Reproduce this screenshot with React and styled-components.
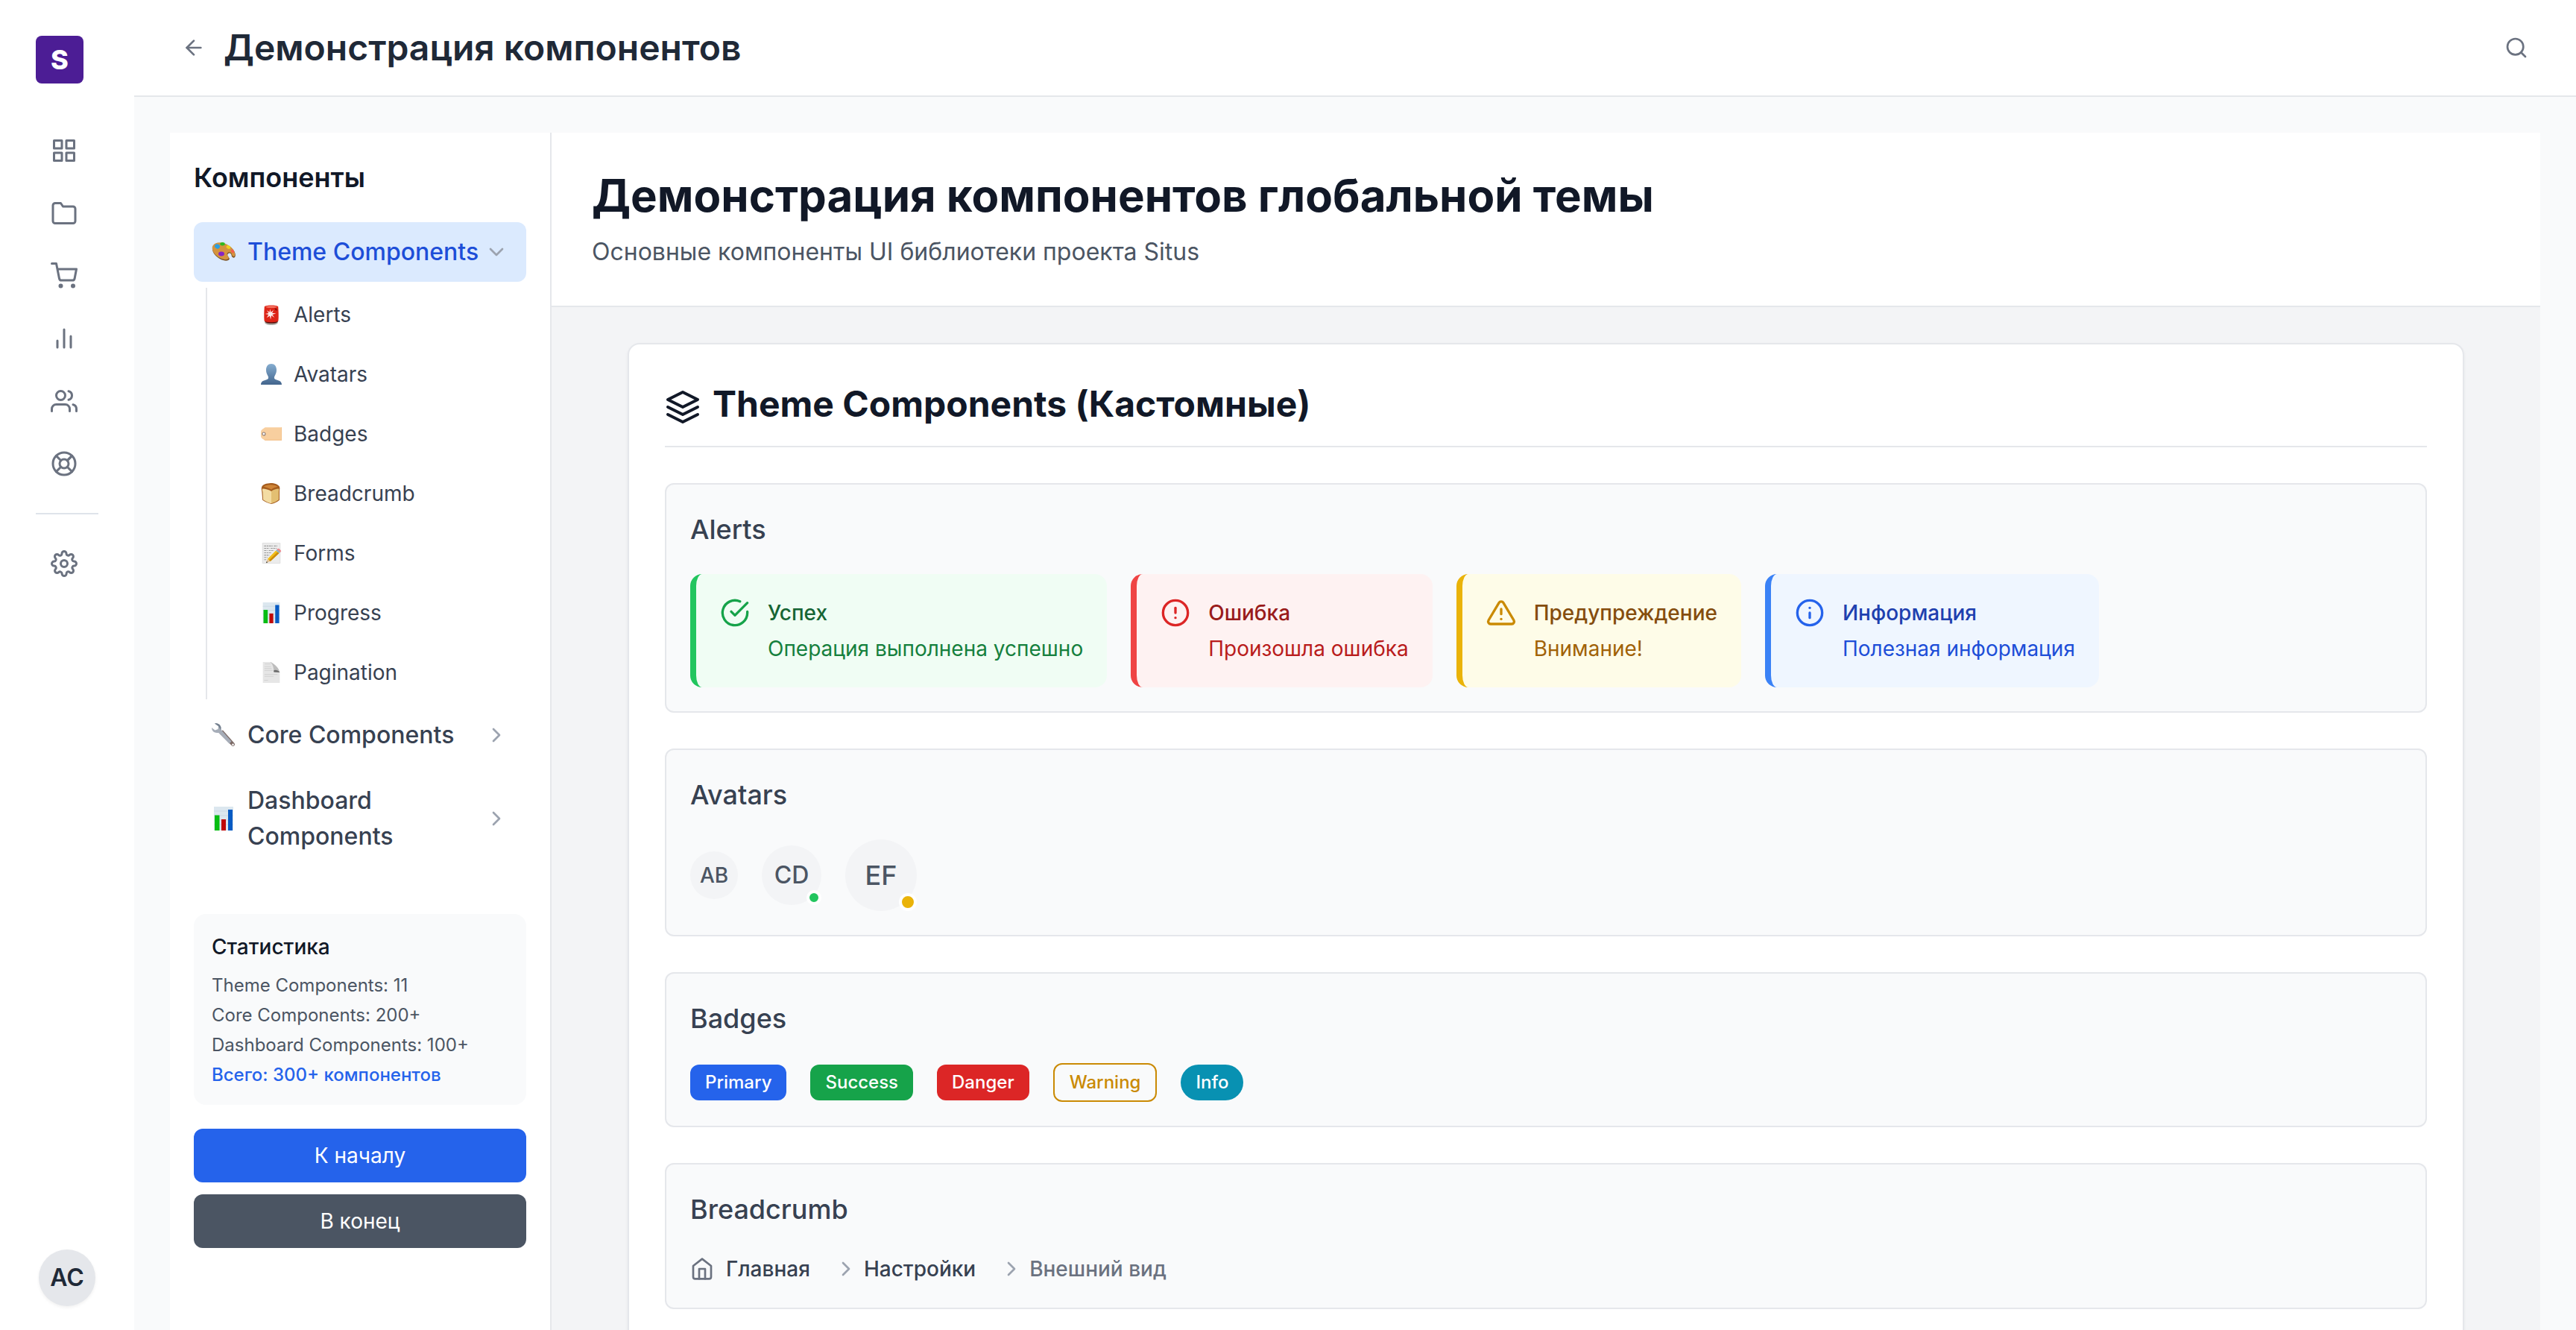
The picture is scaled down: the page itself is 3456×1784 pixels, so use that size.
import React from "react";
import styled, { createGlobalStyle, css } from "styled-components";
import {
  FiAlertCircle,
  FiAlertTriangle,
  FiArrowLeft,
  FiBarChart2,
  FiCheckCircle,
  FiChevronDown,
  FiChevronRight,
  FiFolder,
  FiGrid,
  FiHome,
  FiInfo,
  FiLayers,
  FiLifeBuoy,
  FiSearch,
  FiSettings,
  FiShoppingCart,
  FiUsers,
} from "react-icons/fi";

const gray = {
  50: "#f9fafb",
  100: "#f3f4f6",
  200: "#e5e7eb",
  400: "#9ca3af",
  500: "#6b7280",
  600: "#4b5563",
  700: "#374151",
  800: "#1f2937",
  900: "#111827",
};

const GlobalStyle = createGlobalStyle`
  *, *::before, *::after { box-sizing: border-box; }
  body {
    margin: 0;
    background: ${gray[50]};
    color: ${gray[900]};
    font-family: Inter, "Liberation Sans", sans-serif;
    font-size: 32px;
    line-height: 48px;
    -webkit-font-smoothing: antialiased;
  }
  h1, h2, h3, h4, p, ul, ol { margin: 0; padding: 0; }
  ul, ol { list-style: none; }
  a { color: inherit; text-decoration: none; }
  button { font: inherit; color: inherit; border: 0; background: none; cursor: pointer; }
  svg { display: block; flex-shrink: 0; }
`;

/* ---------- Shell ---------- */

const Shell = styled.div`
  display: flex;
  height: 100vh;
  overflow: hidden;
`;

const Rail = styled.nav`
  display: flex;
  flex-direction: column;
  flex: none;
  width: 180px;
  padding: 48px 48px 32px;
  background: #fff;
`;

const Logo = styled.a`
  display: flex;
  align-items: center;
  justify-content: center;
  width: 64px;
  height: 64px;
  margin-bottom: 60px;
  border-radius: 8px;
  background: #4c1d95;
  color: #fff;
  font-size: 36px;
  font-weight: 800;
`;

const RailList = styled.ul`
  display: flex;
  flex-direction: column;
  gap: 24px;
`;

const RailLink = styled.a`
  display: flex;
  align-items: center;
  width: 76px;
  height: 60px;
  padding: 0 20px;
  color: ${gray[500]};
  font-size: 36px;
`;

const RailDivider = styled.hr`
  width: 100%;
  height: 2px;
  margin: 36px 0;
  border: 0;
  background: #dfe4ea;
`;

const UserButton = styled.button`
  display: flex;
  align-items: center;
  justify-content: center;
  align-self: center;
  width: 76px;
  height: 76px;
  margin-top: auto;
  padding: 0;
  border-radius: 50%;
  background: ${gray[200]};
  box-shadow: 0 2px 4px rgba(0, 0, 0, 0.06);
  color: ${gray[800]};
  font-weight: 600;
`;

const Page = styled.div`
  display: flex;
  flex-direction: column;
  flex: 1;
  min-width: 0;
`;

const TopBar = styled.header`
  display: flex;
  align-items: center;
  gap: 8px;
  padding: 32px 48px;
  border-bottom: 2px solid ${gray[200]};
  background: #fff;
`;

const PageTitle = styled.h1`
  flex: 1;
  color: ${gray[800]};
  font-size: 48px;
  line-height: 64px;
  font-weight: 600;
`;

const IconButton = styled.button`
  display: flex;
  padding: 16px;
  border-radius: 12px;
  color: ${gray[500]};
`;

const Workspace = styled.div`
  display: flex;
  flex: 1;
  min-height: 0;
  padding: 48px 48px 0;
`;

/* ---------- Catalogue sidebar ---------- */

const Aside = styled.aside`
  flex: none;
  width: 512px;
  padding: 32px;
  border-right: 2px solid ${gray[200]};
  background: #fff;
  overflow: hidden;
`;

const AsideTitle = styled.h2`
  margin-bottom: 32px;
  font-size: 36px;
  line-height: 56px;
  font-weight: 600;
`;

const GroupList = styled.ul`
  display: flex;
  flex-direction: column;
  gap: 8px;
`;

const GroupButton = styled.button`
  display: flex;
  align-items: center;
  width: 100%;
  padding: 16px 24px;
  border-radius: 12px;
  background: ${(p) => (p.$active ? "#dbeafe" : "transparent")};
  color: ${(p) => (p.$active ? "#1d4ed8" : gray[700])};
  font-weight: 500;
  text-align: left;
`;

const GroupLabel = styled.span`
  flex: 1;
  margin-left: 16px;
`;

const Chevron = styled.span`
  color: ${gray[400]};
  font-size: 32px;
`;

const SubList = styled.ul`
  display: flex;
  flex-direction: column;
  gap: 8px;
  margin: 8px 0 0 16px;
  padding-left: 48px;
  border-left: 2px solid ${gray[200]};
`;

const SubLink = styled.a`
  display: flex;
  align-items: center;
  gap: 16px;
  padding: 16px 24px;
  border-radius: 12px;
  color: ${gray[700]};
  font-size: 28px;
  line-height: 40px;
`;

const Stats = styled.section`
  margin-top: 64px;
  padding: 24px;
  border-radius: 16px;
  background: ${gray[50]};
`;

const StatsTitle = styled.h3`
  margin-bottom: 16px;
  font-size: 28px;
  line-height: 40px;
  font-weight: 500;
`;

const StatsList = styled.ul`
  display: flex;
  flex-direction: column;
  gap: 8px;
  color: ${gray[600]};
  font-size: 24px;
  line-height: 32px;
`;

const StatsTotal = styled.li`
  color: #2563eb;
  font-weight: 500;
`;

const JumpButtons = styled.div`
  display: flex;
  flex-direction: column;
  gap: 16px;
  margin-top: 32px;
`;

const JumpButton = styled.button`
  padding: 16px 24px;
  border-radius: 12px;
  background: ${(p) => (p.$primary ? "#2563eb" : gray[600])};
  color: #fff;
  font-size: 28px;
  line-height: 40px;
`;

/* ---------- Main column ---------- */

const Main = styled.main`
  flex: 1;
  min-width: 0;
  background: ${gray[100]};
  overflow: hidden;
`;

const Intro = styled.header`
  padding: 48px;
  border-bottom: 2px solid ${gray[200]};
  background: #fff;
`;

const IntroInner = styled.div`
  max-width: 2560px;
  margin: 0 auto;
`;

const IntroTitle = styled.h2`
  margin-bottom: 16px;
  font-size: 60px;
  line-height: 72px;
  font-weight: 700;
`;

const IntroText = styled.p`
  color: ${gray[600]};
`;

const Content = styled.div`
  max-width: 2560px;
  margin: 0 auto;
  padding: 48px;
`;

const Card = styled.section`
  padding: 48px;
  border: 2px solid ${gray[200]};
  border-radius: 16px;
  background: #fff;
  box-shadow: 0 2px 4px rgba(0, 0, 0, 0.05);
`;

const CardTitle = styled.h2`
  margin-bottom: 48px;
  padding-bottom: 24px;
  border-bottom: 2px solid ${gray[200]};
  font-size: 48px;
  line-height: 64px;
  font-weight: 700;

  svg {
    display: inline-block;
    margin-right: 16px;
    vertical-align: middle;
  }
`;

const DemoList = styled.div`
  display: flex;
  flex-direction: column;
  gap: 48px;
`;

const DemoBox = styled.section`
  padding: 32px;
  border: 2px solid ${gray[200]};
  border-radius: 12px;
  background: ${gray[50]};
`;

const DemoTitle = styled.h3`
  margin-bottom: 32px;
  color: ${gray[700]};
  font-size: 36px;
  line-height: 56px;
  font-weight: 500;
`;

const DemoRow = styled.div`
  display: flex;
  flex-wrap: wrap;
  align-items: center;
  gap: 32px;
`;

const alertTones = {
  success: { bg: "#f0fdf4", bar: "#22c55e", icon: "#16a34a", title: "#166534", text: "#15803d" },
  error: { bg: "#fef2f2", bar: "#ef4444", icon: "#dc2626", title: "#991b1b", text: "#b91c1c" },
  warning: { bg: "#fefce8", bar: "#eab308", icon: "#ca8a04", title: "#854d0e", text: "#a16207" },
  info: { bg: "#eff6ff", bar: "#3b82f6", icon: "#2563eb", title: "#1e40af", text: "#1d4ed8" },
};

const AlertBox = styled.div`
  display: flex;
  gap: 24px;
  padding: 32px;
  border-left: 8px solid ${(p) => alertTones[p.$tone].bar};
  border-radius: 16px;
  background: ${(p) => alertTones[p.$tone].bg};
  font-size: 28px;
  line-height: 40px;

  svg {
    color: ${(p) => alertTones[p.$tone].icon};
  }
  h4 {
    margin-bottom: 8px;
    color: ${(p) => alertTones[p.$tone].title};
    font-size: inherit;
    font-weight: 500;
  }
  p {
    color: ${(p) => alertTones[p.$tone].text};
  }
`;

const Avatar = styled.span`
  position: relative;
  display: flex;
  align-items: center;
  justify-content: center;
  width: ${(p) => p.$size}px;
  height: ${(p) => p.$size}px;
  border-radius: 50%;
  background: ${gray[100]};
  color: ${gray[600]};
  font-size: ${(p) => p.$font}px;
  font-weight: 500;
`;

const StatusDot = styled.span`
  position: absolute;
  right: 0;
  bottom: 0;
  width: ${(p) => p.$size}px;
  height: ${(p) => p.$size}px;
  border: 4px solid #fff;
  border-radius: 50%;
  background: ${(p) => p.$color};
`;

const Badge = styled.span`
  padding: 8px 20px;
  border-radius: ${(p) => (p.$pill ? "24px" : "12px")};
  font-size: 24px;
  line-height: 32px;
  font-weight: 500;
  ${(p) =>
    p.$outline
      ? css`
          border: 2px solid ${p.$color};
          color: ${p.$color};
        `
      : css`
          background: ${p.$color};
          color: #fff;
        `}
`;

const Crumbs = styled.ol`
  display: flex;
  align-items: center;
  gap: 32px;
  font-size: 28px;
  line-height: 40px;
  font-weight: 500;
`;

const Crumb = styled.li`
  display: flex;
  align-items: center;
  gap: ${(p) => (p.$first ? 16 : 8)}px;
  color: ${(p) => (p.$current ? gray[500] : gray[700])};

  svg {
    color: ${(p) => (p.$first ? gray[500] : gray[400])};
  }
`;

/* ---------- Pictograms ---------- */

const pictograms = {
  palette: (
    <>
      <path d="M2 8.500C6 2.500 15 3 22 7c6 3.500 10 9 9.800 13.500-.2 3.500-3 4-4.500 2-1-1.400-.5-3.500-2-4.500-2-1.200-4.500.5-4 2.500.6 2.400 3.500 3.500 2.200 5.500-1.600 2.600-7.500 2-12-.5C4.500 22-1.500 14 2 8.500Z" fill="#7b5120" />
      <path d="M1.500 7.500C5.500 2 14 2.300 21 6.200c6.500 3.600 10.500 9 10.300 13.300-.2 2.800-2.300 3.300-3.600 1.500-1.100-1.500-.7-3.200-2.200-4.200-2.300-1.400-5.500.2-4.800 2.700.6 2.300 3 3.300 2 5-1.500 2.500-7 2-11.500-.5C4.500 20.500-1.500 13 1.500 7.500Z" fill="#d4933e" />
      <ellipse cx="14.500" cy="5.300" rx="3.200" ry="2.200" fill="#2fb91f" />
      <ellipse cx="7.500" cy="8.500" rx="3.600" ry="2.900" fill="#2a9fe0" transform="rotate(25 7.500 8.500)" />
      <ellipse cx="22.500" cy="9.500" rx="3" ry="2.100" fill="#f0cf1f" transform="rotate(25 22.500 9.500)" />
      <ellipse cx="28" cy="15" rx="2.700" ry="1.900" fill="#f2604c" transform="rotate(50 28 15)" />
      <ellipse cx="13" cy="18.500" rx="4" ry="3" fill="#8624c4" />
    </>
  ),
  siren: (
    <>
      <path d="M6 26h20v2c0 2.500-4 4-10 4S6 30.500 6 28Z" fill="#a9a9a3" />
      <path d="M6 25.500h20l-.3 1.500c-1.500 1.800-5.500 2.500-9.700 2.500s-8-.8-9.500-2.500Z" fill="#5b0f0b" />
      <path d="M5.500 4C7 1 25 1 26.500 4c.6 7 .9 15 .3 21.500C25 28.500 7 28.500 5.200 25.500 4.600 18 4.900 11 5.500 4Z" fill="#dd2417" />
      <path d="M7.500 4c2-2 15-2 17 0 .5 2.500-17.500 2.500-17 0Z" fill="#f4705f" />
      <path d="m14 7 1.200 5.200L19.500 9l-2.300 4.400 6 .9-5.600 1.700 3.200 4.500-4.800-3-1 6-1.500-5.600-4.600 3 2.800-4.800-5.200-1.200 5.400-1.200L9 9.500l4.300 2.800Z" fill="#fff" opacity=".9" />
      <path d="M21 6c3 0 4 1 4 4l-3-1Z" fill="#8c1009" />
    </>
  ),
  person: (
    <>
      <defs>
        <linearGradient id="bust" x1="0" y1="0" x2="0" y2="1">
          <stop offset="0" stopColor="#85add0" />
          <stop offset="1" stopColor="#43658d" />
        </linearGradient>
      </defs>
      <path d="M16 0c5 0 8 4 8 9.500 0 3.500-1 6-2.500 8.500-1.500 2.500-1.500 5 1 6 4 1.600 9.500 2 9.500 8H0c0-6 5.500-6.400 9.500-8 2.500-1 2.500-3.500 1-6C9 15.500 8 13 8 9.500 8 4 11 0 16 0Z" fill="url(#bust)" />
    </>
  ),
  tag: (
    <>
      <path d="M6.500 6H32v20H6.500L2 23c-1.300-1-2-2-2-4v-6c0-2 .7-3 2-4Z" fill="#f8cf9f" />
      <path d="M31 6h1v20H6.500L4 24.500h27Z" fill="#f3c48e" />
      <circle cx="4.500" cy="16" r="2.300" fill="#fff" stroke="#8a7a75" strokeWidth="1.200" />
    </>
  ),
  bread: (
    <>
      <path d="M1.500 5.500C3 2 9 .2 15 0c6 0 12 2.300 13.500 5.500 1 2.500.2 4.500 0 7v13.500c-3 2.700-8 5-12.500 6C11 31 5.500 28.500 2.500 26L1.500 13C.8 10 .6 7.500 1.500 5.500Z" fill="#a55c1d" />
      <path d="M2.500 8.500c4 0 10 1.500 13.500 4v18.500c-4.500-1-9.500-3.300-12.500-5.700L2.800 13C2 11.500 1.800 10 2.500 8.500Z" fill="#f3dca3" />
      <path d="M16 12.500c2.500-2.500 8-4 11.500-4 .6 1.500 0 3-.2 5v12c-3 2.500-7 4.700-11.300 5.500Z" fill="#e3bf72" />
      <path d="M4 5.500c5-4 17-4 22 0-4 .8-7.500 2.200-10 4.500-3-2-7.500-3.200-12-4.500Z" fill="#cf8537" />
    </>
  ),
  memo: (
    <>
      <path d="M2.500.5h27v31h-27Z" fill="#ececec" stroke="#dcdcdc" />
      <path d="M5 5h13m2 0h5M5 8.500h8m2 0h9M5 12h5m2 0h8M5 15.500h11M5 19h8M5 22.500h5M5 26h4" stroke="#9b9b9b" strokeWidth="1.200" strokeDasharray="3 .8" />
      <path d="m10 25 13-13 5 4-13.500 12.500Z" fill="#f2bd16" />
      <path d="m12.500 26.800 13-12.600 2.500 1.800-13.500 12.500Z" fill="#c98a10" />
      <path d="m10 25 4.500 3.500L8 31Z" fill="#e3c49a" />
      <path d="m8.800 28.500 1.700 1.500L8 31Z" fill="#333" />
      <path d="m23 12 2-2 5 4-2 2Z" fill="#8fb3c0" />
      <path d="m25 10c2-2 7 2 5 4Z" fill="#ee8489" stroke="#ee8489" />
    </>
  ),
  chart: (
    <>
      <path d="M3 0h26v32H3Z" fill="#dce7ef" />
      <path d="M3 6h26M3 12h26M3 18h26M3 24h26" stroke="#cbd9e4" />
      <path d="M4 11.500h6.500V32H4Z" fill="#07bd12" />
      <path d="M13 17h6v15h-6Z" fill="#c00808" />
      <path d="M22 4h6v28h-6Z" fill="#075bc4" />
    </>
  ),
  page: (
    <>
      <path d="M3 0h12c4 2 5 8 5 11 3 1 7 1 9 5v16H3Z" fill="#e6e6e6" />
      <path d="M6 3h9M5.500 7h10m-10 3h11m-11 3h13m-13 6h20m-20 3h14M5 28h6" stroke="#cfcfcf" />
      <path d="M14 0c5 1 14 9 15 16-3-1-6-.5-9-.5C19.500 10 19 3 14 0Z" fill="#bdbdbd" />
      <path d="M19.500 13c3-1.500 7-.5 9.500 3-3 0-6-.5-9-.5Z" fill="#6b6b6b" />
    </>
  ),
  wrench: (
    <>
      <path d="m11 11 4-1.500L30.500 27c1.500 2.200-.8 4.800-3.200 3.500L10.500 14Z" fill="#7c6a66" />
      <path d="M4 .5c4-1 8 1.500 8.500 5.500.2 1.500 0 2.500 1 3.800l13 14.700-3 3L10 13.500c-1.500-1-3-.3-4.800-.7C2 12 0 9.500 0 6l4.500 3.500 4-1.500.5-4Z" fill="#a6adb8" />
      <path d="M4 .5c4-1 8 1.500 8.500 5.500l-.5 3-3-5Z" fill="#74808f" />
      <circle cx="28.500" cy="28.800" r="1.300" fill="#fff" />
    </>
  ),
};

const Pictogram = ({ name, size }) => (
  <svg width={size} height={size} viewBox="0 0 32 32" fill="none" aria-hidden="true">
    {pictograms[name]}
  </svg>
);

/* ---------- Data ---------- */

const railItems = [
  { label: "Панель", Icon: FiGrid },
  { label: "Проекты", Icon: FiFolder },
  { label: "Магазин", Icon: FiShoppingCart },
  { label: "Аналитика", Icon: FiBarChart2 },
  { label: "Пользователи", Icon: FiUsers },
  { label: "Поддержка", Icon: FiLifeBuoy },
];

const themeItems = [
  ["Alerts", "siren"],
  ["Avatars", "person"],
  ["Badges", "tag"],
  ["Breadcrumb", "bread"],
  ["Forms", "memo"],
  ["Progress", "chart"],
  ["Pagination", "page"],
];

const alerts = [
  { tone: "success", Icon: FiCheckCircle, title: "Успех", text: "Операция выполнена успешно" },
  { tone: "error", Icon: FiAlertCircle, title: "Ошибка", text: "Произошла ошибка" },
  { tone: "warning", Icon: FiAlertTriangle, title: "Предупреждение", text: "Внимание!" },
  { tone: "info", Icon: FiInfo, title: "Информация", text: "Полезная информация" },
];

/* ---------- Sections ---------- */

const NavRail = () => (
  <Rail>
    <Logo href="#">S</Logo>
    <RailList>
      {railItems.map(({ label, Icon }) => (
        <li key={label}>
          <RailLink href="#" aria-label={label}>
            <Icon />
          </RailLink>
        </li>
      ))}
    </RailList>
    <RailDivider />
    <RailLink href="#" aria-label="Настройки">
      <FiSettings />
    </RailLink>
    <UserButton type="button">AC</UserButton>
  </Rail>
);

const Group = ({ icon, label, open, children }) => (
  <li>
    <GroupButton type="button" $active={open} aria-expanded={!!open}>
      <Pictogram name={icon} size={32} />
      <GroupLabel>{label}</GroupLabel>
      <Chevron>{open ? <FiChevronDown /> : <FiChevronRight />}</Chevron>
    </GroupButton>
    {children}
  </li>
);

const Catalogue = () => (
  <Aside>
    <AsideTitle>Компоненты</AsideTitle>
    <GroupList>
      <Group icon="palette" label="Theme Components" open>
        <SubList>
          {themeItems.map(([label, icon]) => (
            <li key={label}>
              <SubLink href={`#${label.toLowerCase()}`}>
                <Pictogram name={icon} size={28} />
                {label}
              </SubLink>
            </li>
          ))}
        </SubList>
      </Group>
      <Group icon="wrench" label="Core Components" />
      <Group icon="chart" label="Dashboard Components" />
    </GroupList>
    <Stats>
      <StatsTitle>Статистика</StatsTitle>
      <StatsList>
        <li>Theme Components: 11</li>
        <li>Core Components: 200+</li>
        <li>Dashboard Components: 100+</li>
        <StatsTotal>Всего: 300+ компонентов</StatsTotal>
      </StatsList>
    </Stats>
    <JumpButtons>
      <JumpButton type="button" $primary>
        К началу
      </JumpButton>
      <JumpButton type="button">В конец</JumpButton>
    </JumpButtons>
  </Aside>
);

const Demo = ({ title, children }) => (
  <DemoBox id={title.toLowerCase()}>
    <DemoTitle>{title}</DemoTitle>
    {children}
  </DemoBox>
);

const Showcase = () => (
  <Card>
    <CardTitle>
      <FiLayers />
      Theme Components (Кастомные)
    </CardTitle>
    <DemoList>
      <Demo title="Alerts">
        <DemoRow>
          {alerts.map(({ tone, Icon, title, text }) => (
            <AlertBox key={tone} role="alert" $tone={tone}>
              <Icon size={40} />
              <div>
                <h4>{title}</h4>
                <p>{text}</p>
              </div>
            </AlertBox>
          ))}
        </DemoRow>
      </Demo>
      <Demo title="Avatars">
        <DemoRow>
          <Avatar $size={64} $font={28}>
            AB
          </Avatar>
          <Avatar $size={80} $font={32}>
            CD
            <StatusDot $size={20} $color="#22c55e" />
          </Avatar>
          <Avatar $size={96} $font={36}>
            EF
            <StatusDot $size={24} $color="#eab308" />
          </Avatar>
        </DemoRow>
      </Demo>
      <Demo title="Badges">
        <DemoRow>
          <Badge $color="#2563eb">Primary</Badge>
          <Badge $color="#16a34a">Success</Badge>
          <Badge $color="#dc2626">Danger</Badge>
          <Badge $color="#ca8a04" $outline>
            Warning
          </Badge>
          <Badge $color="#0891b2" $pill>
            Info
          </Badge>
        </DemoRow>
      </Demo>
      <Demo title="Breadcrumb">
        <nav aria-label="Breadcrumb">
          <Crumbs>
            <Crumb $first>
              <FiHome size={32} />
              <a href="#">Главная</a>
            </Crumb>
            <Crumb>
              <FiChevronRight size={32} />
              <a href="#">Настройки</a>
            </Crumb>
            <Crumb $current aria-current="page">
              <FiChevronRight size={32} />
              Внешний вид
            </Crumb>
          </Crumbs>
        </nav>
      </Demo>
    </DemoList>
  </Card>
);

export default function App() {
  return (
    <>
      <GlobalStyle />
      <Shell>
        <NavRail />
        <Page>
          <TopBar>
            <IconButton type="button" aria-label="Назад">
              <FiArrowLeft size={32} />
            </IconButton>
            <PageTitle>Демонстрация компонентов</PageTitle>
            <IconButton type="button" aria-label="Поиск">
              <FiSearch size={32} />
            </IconButton>
          </TopBar>
          <Workspace>
            <Catalogue />
            <Main>
              <Intro>
                <IntroInner>
                  <IntroTitle>Демонстрация компонентов глобальной темы</IntroTitle>
                  <IntroText>Основные компоненты UI библиотеки проекта Situs</IntroText>
                </IntroInner>
              </Intro>
              <Content>
                <Showcase />
              </Content>
            </Main>
          </Workspace>
        </Page>
      </Shell>
    </>
  );
}
